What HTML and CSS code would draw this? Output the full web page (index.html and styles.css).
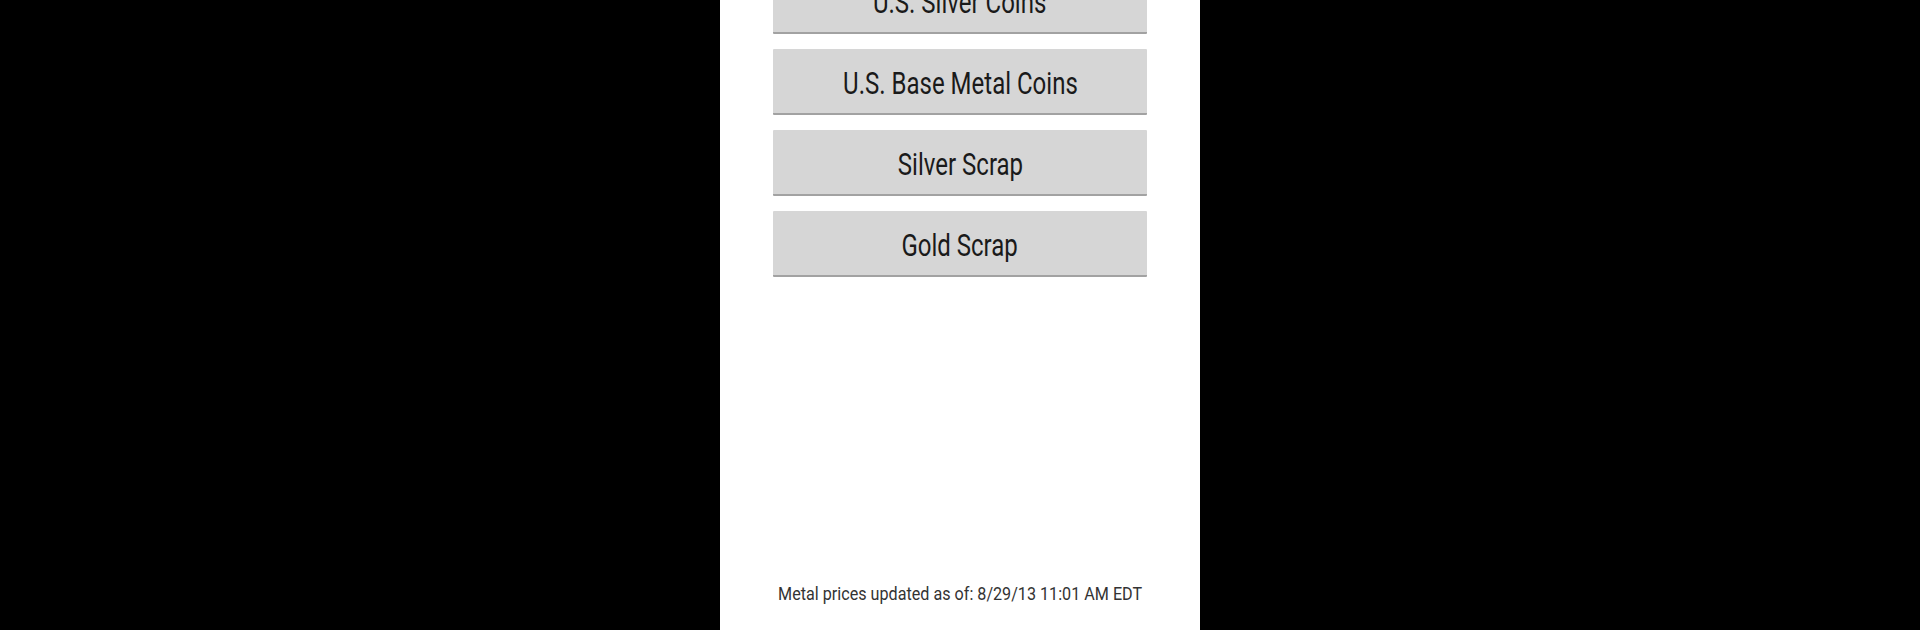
FILE: index.html
```html
<!DOCTYPE html>
<html>
<head>
<meta charset="utf-8">
<link rel="stylesheet" href="styles.css">
</head>
<body>
<div class="screen">
  <div class="list">
    <div class="btn"><span class="label">U.S. Silver Coins</span></div>
    <div class="btn"><span class="label">U.S. Base Metal Coins</span></div>
    <div class="btn"><span class="label">Silver Scrap</span></div>
    <div class="btn"><span class="label">Gold Scrap</span></div>
  </div>
  <div class="footer"><span class="foot-label">Metal prices updated as of: 8/29/13 11:01 AM EDT</span></div>
</div>
</body>
</html>
```
FILE: styles.css
```css
html, body {
  margin: 0;
  padding: 0;
  background: #000;
  height: 630px;
  overflow: hidden;
}
.screen {
  width: 480px;
  height: 630px;
  margin: 0 auto;
  background: #fff;
  display: flex;
  flex-direction: column;
  align-items: center;
  font-family: Roboto, "Noto Sans", sans-serif;
}
.list {
  margin-top: -32px;
  width: 374px;
  display: flex;
  flex-direction: column;
  gap: 15px;
}
.btn {
  height: 61px;
  padding-top: 3px;
  background: #d6d6d6;
  border-bottom: 2px solid #a2a2a2;
  border-radius: 1px;
  display: flex;
  align-items: center;
  justify-content: center;
  color: #1a1a1a;
  font-size: 32px;
}
.label {
  display: inline-block;
  transform: scaleX(0.75);
  white-space: nowrap;
}
.footer {
  margin-top: auto;
  padding-bottom: 24px;
  line-height: 24px;
  font-size: 19px;
  color: #333;
  white-space: nowrap;
}
.foot-label {
  display: inline-block;
  transform: scaleX(0.85);
}
```
